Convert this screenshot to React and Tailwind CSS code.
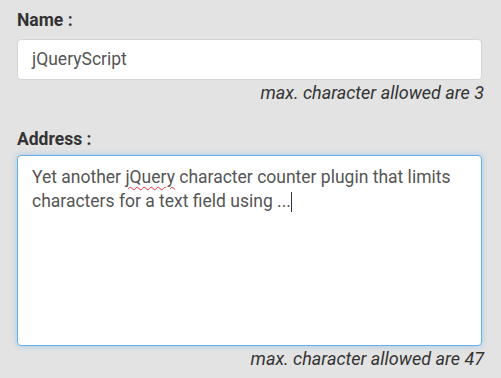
export default function App() {
  return (
    <div className="w-[501px] h-[378px] bg-[#e3e3e3] pl-[17px] pt-[8px] text-[#333]" style={{ fontFamily: 'Roboto, sans-serif' }}>
      <div className="w-[467px]">
        <label className="block text-[17.5px] font-bold leading-[24px] text-[#333]">Name :</label>
        <div className="mt-[7px] w-[465px] h-[41px] bg-white border border-[#d4d4d4] rounded-[4px] pl-[14px] flex items-center text-[17.5px] text-[#555]">
          jQueryScript
        </div>
        <p className="text-right italic text-[18px] leading-[24px] text-[#333] mt-[1px]">max. character allowed are 3</p>

        <label className="block mt-[22px] text-[17.5px] font-bold leading-[24px] text-[#333]">Address :</label>
        <div className="mt-[4px] w-[465px] h-[191px] bg-white border border-[#66afe9] rounded-[4px] shadow-[0_0_6px_rgba(102,175,233,0.5)] px-[14px] pt-[9px] text-[17.5px] leading-[24px] text-[#555]">
          Yet another{' '}
          <span className="underline decoration-wavy decoration-red-500 decoration-1 underline-offset-[3px]">jQuery</span>{' '}
          character counter plugin that limits characters for a text field using ...
          <span className="inline-block w-px h-[20px] bg-[#333] align-middle" />
        </div>
        <p className="text-right italic text-[18px] leading-[24px] text-[#333] mt-[1px]">max. character allowed are 47</p>
      </div>
    </div>
  )
}
